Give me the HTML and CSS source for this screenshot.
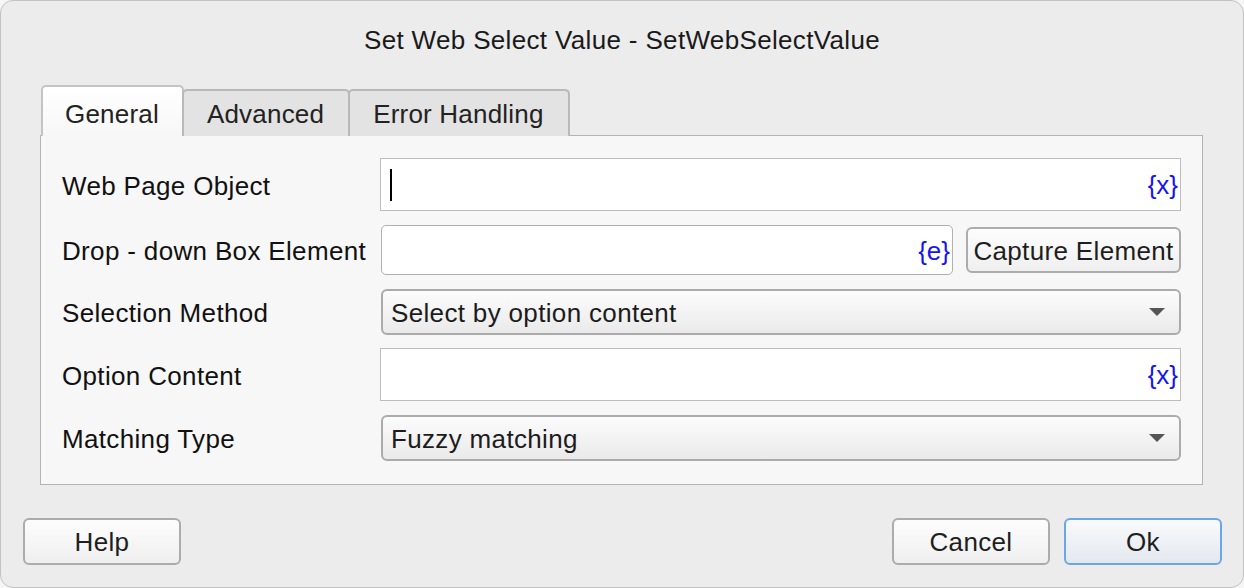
FILE: index.html
```html
<!DOCTYPE html>
<html>
<head>
<meta charset="utf-8">
<link rel="stylesheet" href="styles.css">
</head>
<body>
<div class="window">
  <div class="title">Set Web Select Value - SetWebSelectValue</div>
  <div class="tabs">
    <div class="tab active">General</div>
    <div class="tab">Advanced</div>
    <div class="tab">Error Handling</div>
  </div>
  <div class="panel">
    <div class="row r1">
      <div class="label">Web Page Object</div>
      <div class="field input">
        <span class="caret"></span>
        <span class="var">{x}</span>
      </div>
    </div>
    <div class="row r2">
      <div class="label">Drop - down Box Element</div>
      <div class="combo">
        <div class="field input rounded">
          <span></span>
          <span class="var">{e}</span>
        </div>
        <div class="btn capture">Capture Element</div>
      </div>
    </div>
    <div class="row r3">
      <div class="label">Selection Method</div>
      <div class="field select">
        <span>Select by option content</span>
        <span class="arrow"></span>
      </div>
    </div>
    <div class="row r4">
      <div class="label">Option Content</div>
      <div class="field input">
        <span></span>
        <span class="var">{x}</span>
      </div>
    </div>
    <div class="row r5">
      <div class="label">Matching Type</div>
      <div class="field select">
        <span>Fuzzy matching</span>
        <span class="arrow"></span>
      </div>
    </div>
  </div>
  <div class="footer">
    <div class="btn fbtn">Help</div>
    <div class="spacer"></div>
    <div class="btn fbtn">Cancel</div>
    <div class="btn fbtn ok">Ok</div>
  </div>
</div>
</body>
</html>
```
FILE: styles.css
```css
* { box-sizing: border-box; }
html, body {
  margin: 0;
  padding: 0;
  background: #f6f6f6;
}
body {
  width: 1244px;
  height: 588px;
  overflow: hidden;
  font-family: "Liberation Sans", Arial, sans-serif;
  font-size: 26px;
  letter-spacing: 0.34px;
  color: #1c1c1c;
}
.window {
  width: 1244px;
  height: 588px;
  background: #ececec;
  border: 1px solid #c2c2c2;
  border-radius: 13px;
  display: flex;
  flex-direction: column;
}
.title {
  margin-top: 24px;
  height: 30px;
  line-height: 30px;
  text-align: center;
  color: #1a1a1a;
}
.tabs {
  margin-top: 30px;
  margin-left: 40px;
  display: flex;
  align-items: flex-end;
  height: 51px;
  position: relative;
  z-index: 2;
}
.tab {
  height: 47px;
  line-height: 47px;
  padding: 0 24px 0 23px;
  letter-spacing: 0.2px;
  background: #e3e3e3;
  border: 2px solid #b9b9b9;
  border-bottom: none;
  border-radius: 5px 5px 0 0;
  margin-left: -2px;
  color: #222;
}
.tab:first-child { margin-left: 0; }
.tab.active {
  height: 51px;
  line-height: 55px;
  background: linear-gradient(#ffffff, #f7f7f7);
  border-color: #c4c4c4;
  padding: 0 23px 0 22px;
}
.panel {
  margin-left: 39px;
  margin-top: -1px;
  width: 1163px;
  height: 350px;
  background: #f7f7f7;
  border: 1px solid #b4b4b4;
  padding: 22px 21px 0 21px;
  display: flex;
  flex-direction: column;
  gap: 14px;
  position: relative;
  z-index: 1;
}
.row {
  display: grid;
  grid-template-columns: 318px 1fr;
  align-items: center;
}
.r1 { height: 53px; }
.r2 { height: 50px; }
.r3 { height: 46px; }
.r4 { height: 53px; margin-top: -1px; }
.r5 { height: 46px; }
.label {
  color: #111;
  white-space: nowrap;
  padding-top: 3px;
}
.field {
  height: 100%;
  display: flex;
  align-items: center;
  justify-content: space-between;
}
.input {
  background: #ffffff;
  border: 1px solid #bdbdbd;
  padding: 0 2px 0 9px;
}
.input.rounded {
  border: 1px solid #b0b0b0;
  border-radius: 5px;
  flex: 1;
  margin-left: 1px;
}
.caret {
  width: 2px;
  height: 32px;
  background: #000;
}
.var {
  color: #1414f0;
  font-size: 26px;
  letter-spacing: 0;
  padding-top: 2px;
}
.combo {
  display: flex;
  align-items: center;
  gap: 13px;
  height: 100%;
}
.btn {
  display: flex;
  align-items: center;
  justify-content: center;
  background: linear-gradient(#fdfdfd, #efefef);
  border: 2px solid #acacac;
  border-radius: 6px;
  color: #1e1e1e;
  padding-top: 2px;
}
.capture {
  width: 215px;
  height: 46px;
}
.select {
  margin-left: 1px;
  background: linear-gradient(#fcfcfc, #eaeaea);
  border: 2px solid #ababab;
  border-radius: 6px;
  padding: 2px 14px 0 8px;
}
.arrow {
  width: 0;
  height: 0;
  border-left: 8px solid transparent;
  border-right: 8px solid transparent;
  border-top: 8px solid #555;
  margin-top: -2px;
}
.footer {
  display: flex;
  margin-top: 33px;
  padding: 0 21px 0 22px;
  gap: 14px;
}
.spacer { flex: 1; }
.fbtn {
  width: 158px;
  height: 47px;
}
.ok {
  border-color: #69a6ea;
  background: linear-gradient(#f9fafc, #e3e8ef);
}
```
